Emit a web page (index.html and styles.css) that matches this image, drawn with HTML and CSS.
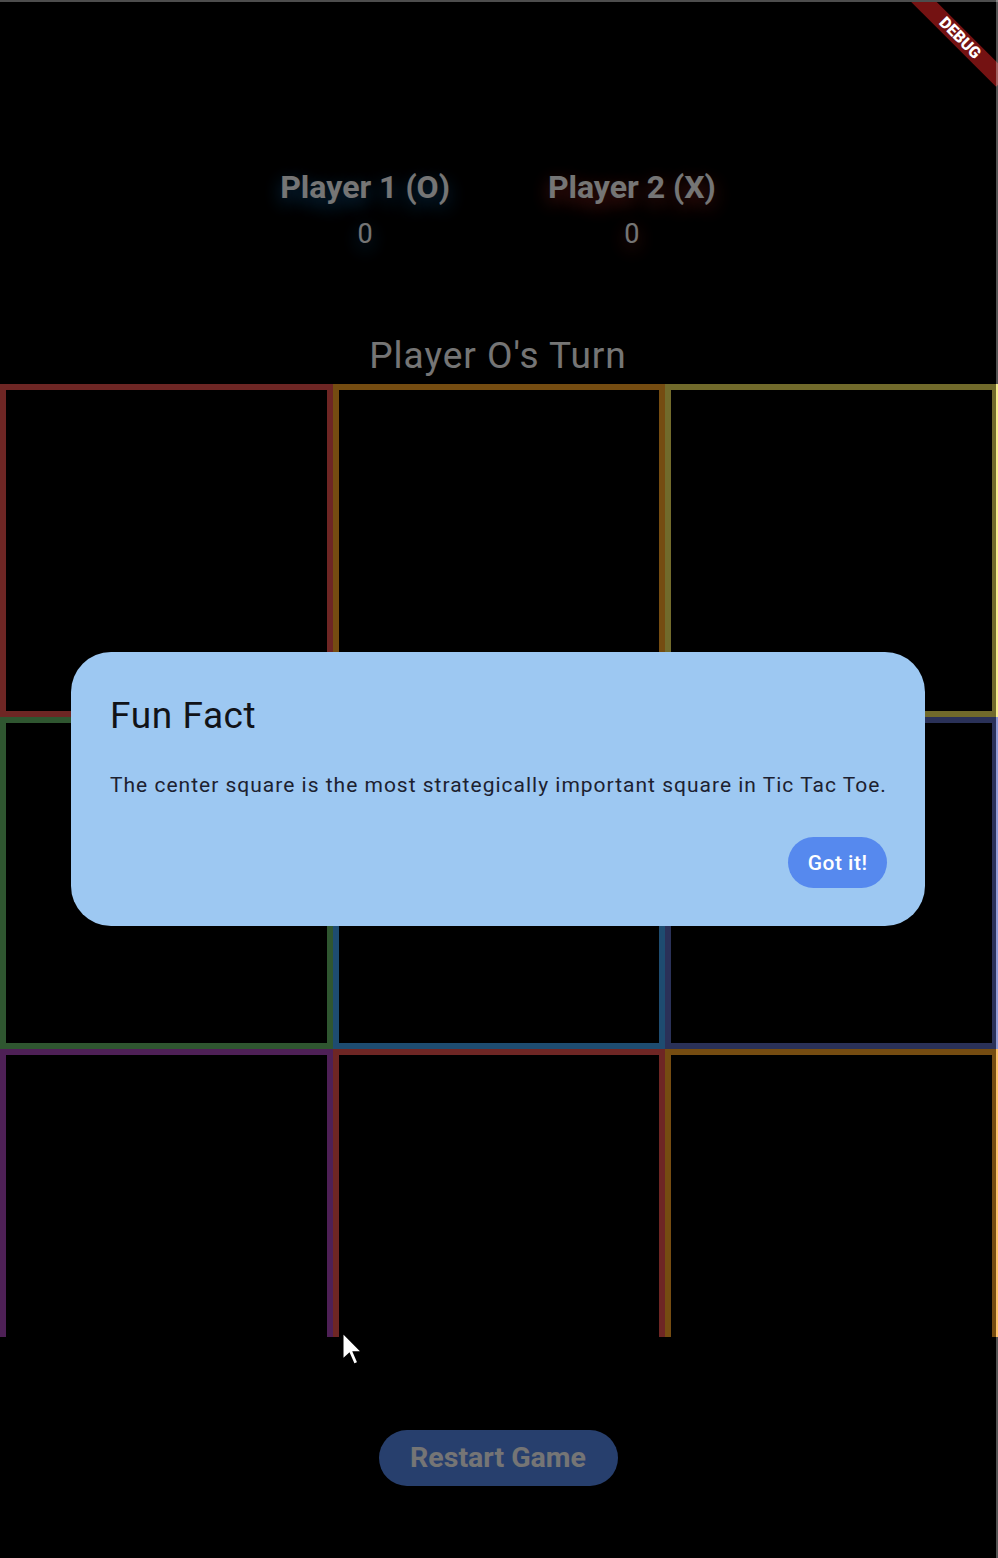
FILE: index.html
```html
<!DOCTYPE html>
<html lang="en">
<head>
<meta charset="utf-8">
<title>Tic Tac Toe</title>
<link rel="stylesheet" href="styles.css">
</head>
<body>
<div class="app">
  <div class="scores">
    <div class="player p1">
      <div class="pname">Player 1 (O)</div>
      <div class="pscore">0</div>
    </div>
    <div class="player p2">
      <div class="pname">Player 2 (X)</div>
      <div class="pscore">0</div>
    </div>
  </div>
  <div class="turn">Player O's Turn</div>
  <div class="board-wrap">
    <div class="board">
      <div class="cell c-red"></div>
      <div class="cell c-orange"></div>
      <div class="cell c-yellow"></div>
      <div class="cell c-green"></div>
      <div class="cell c-blue"></div>
      <div class="cell c-indigo"></div>
      <div class="cell c-purple"></div>
      <div class="cell c-red"></div>
      <div class="cell c-orange"></div>
    </div>
  </div>
  <div class="actions">
    <button class="restart">Restart Game</button>
  </div>
</div>

<div class="barrier">
  <div class="dialog">
    <h2 class="dialog-title">Fun Fact</h2>
    <p class="dialog-text">The center square is the most strategically important square in Tic Tac Toe.</p>
    <div class="dialog-actions">
      <button class="got-it">Got it!</button>
    </div>
  </div>
</div>

<div class="debug-banner">DEBUG</div>

<svg class="cursor" viewBox="0 0 14 22" width="23" height="36">
  <path d="M1 1 L1 17.5 L5 13.8 L7.9 20.4 L10.4 19.3 L7.6 12.9 L12.8 12.9 Z" fill="#fff" stroke="#000" stroke-width="1" stroke-linejoin="miter"/>
</svg>

<div class="frame-top"></div>
<div class="frame-right"></div>
</body>
</html>
```

FILE: styles.css
```css
html, body {
  margin: 0;
  padding: 0;
  background: #000;
}

body {
  width: 998px;
  height: 1558px;
  overflow: hidden;
  position: relative;
  font-family: Roboto, "Noto Sans", "Liberation Sans", sans-serif;
}

.app {
  width: 996px;
  height: 1558px;
  box-sizing: border-box;
  padding-top: 168px;
  display: flex;
  flex-direction: column;
}

.scores {
  display: flex;
  justify-content: center;
  gap: 98px;
}

.player {
  display: flex;
  flex-direction: column;
  align-items: center;
}

.pname {
  font-size: 32px;
  font-weight: 700;
  line-height: 38px;
  color: #fff;
}

.pscore {
  margin-top: 12px;
  font-size: 27px;
  line-height: 32px;
  color: #fff;
}

.p1 .pname,
.p1 .pscore {
  text-shadow: 0 6px 18px rgba(33, 150, 243, 0.75);
}

.p2 .pname,
.p2 .pscore {
  text-shadow: 0 6px 18px rgba(244, 67, 54, 0.75);
}

.turn {
  margin-top: 84px;
  text-align: center;
  font-size: 37px;
  line-height: 44px;
  letter-spacing: 1px;
  color: #fff;
}

.board-wrap {
  margin-top: 6px;
  height: 953px;
  width: 998px;
  overflow: hidden;
}

.board {
  display: grid;
  grid-template-columns: repeat(3, 1fr);
  grid-auto-rows: 332.667px;
}

.cell {
  box-sizing: border-box;
  border: 6px solid;
}

.c-red { border-color: #ef5350; }
.c-orange { border-color: #ffa726; }
.c-yellow { border-color: #f7e85e; }
.c-green { border-color: #66bb6a; }
.c-blue { border-color: #42a5f5; }
.c-indigo { border-color: #5c6bc0; }
.c-purple { border-color: #ab47bc; }

.actions {
  margin-top: 93px;
  display: flex;
  justify-content: center;
}

.restart {
  width: 239px;
  height: 56px;
  padding: 0;
  border: 0;
  border-radius: 28px;
  background: #5689ee;
  color: #fff;
  font-family: Roboto, "Noto Sans", sans-serif;
  font-size: 28.5px;
  font-weight: 700;
  line-height: 56px;
}

.barrier {
  position: absolute;
  inset: 0 2px 0 0;
  box-sizing: border-box;
  padding-top: 20px;
  background: rgba(0, 0, 0, 0.54);
  display: flex;
  align-items: center;
  justify-content: center;
}

.dialog {
  width: 854px;
  box-sizing: border-box;
  padding: 40px 38px 38px 39px;
  background: #9dc8f2;
  border-radius: 40px;
}

.dialog-title {
  margin: 0;
  font-size: 37px;
  font-weight: 400;
  line-height: 48px;
  letter-spacing: 0.6px;
  color: #111318;
}

.dialog-text {
  margin: 30px 0 0;
  font-size: 21px;
  font-weight: 400;
  line-height: 30px;
  letter-spacing: 1px;
  white-space: nowrap;
  color: #1c2130;
}

.dialog-actions {
  margin-top: 37px;
  display: flex;
  justify-content: flex-end;
}

.got-it {
  height: 51px;
  padding: 0 19.5px;
  border: 0;
  border-radius: 26px;
  background: #5689ee;
  color: #fff;
  font-family: Roboto, "Noto Sans", sans-serif;
  font-size: 21px;
  font-weight: 500;
  letter-spacing: 0.5px;
}

.debug-banner {
  position: absolute;
  left: 900px;
  top: 29px;
  width: 120px;
  height: 18px;
  transform: rotate(45deg);
  background: rgba(183, 28, 28, 0.63);
  box-shadow: 0 0 6px rgba(0, 0, 0, 0.5);
  color: #fff;
  font-size: 16px;
  font-weight: 900;
  line-height: 18px;
  text-align: center;
}

.cursor {
  position: absolute;
  left: 341px;
  top: 1331px;
}

.frame-top {
  position: absolute;
  left: 0;
  top: 0;
  right: 0;
  height: 2px;
  background: #4d4d4d;
}

.frame-right {
  position: absolute;
  top: 0;
  right: 0;
  bottom: 0;
  width: 2px;
  background: rgba(255, 255, 255, 0.33);
}
```
